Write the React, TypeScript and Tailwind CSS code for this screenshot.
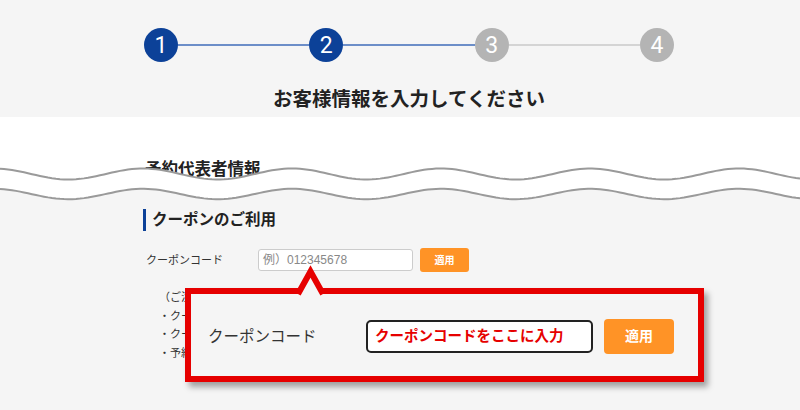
import React from 'react';

// Stepper + coupon form, with a torn-page wave and a zoomed callout on top

const steps = [
  { n: 1, done: true },
  { n: 2, done: true },
  { n: 3, done: false },
  { n: 4, done: false },
];

// sine wave path through the page width
function wavePoints(center: number, amp: number) {
  const pts: string[] = [];
  for (let x = 0; x <= 800; x += 4) {
    const y = center - amp * Math.cos((2 * Math.PI * (x - 143)) / 149);
    pts.push(`${x},${y.toFixed(2)}`);
  }
  return pts;
}

function Wave() {
  const top = wavePoints(14, 5.5);
  const bottom = wavePoints(34, 5.2);
  const between = `M${top.join(' L')} L${[...bottom].reverse().join(' L')} Z`;
  const below = `M${bottom.join(' L')} L800,46 L0,46 Z`;
  return (
    <svg className="absolute left-0 top-[160px] w-[800px] h-[46px]" viewBox="0 0 800 46">
      <path d={between} fill="#ffffff" />
      <path d={below} fill="#f5f5f5" />
      <path d={`M${top.join(' L')}`} fill="none" stroke="#9a9a9a" strokeWidth="2" />
      <path d={`M${bottom.join(' L')}`} fill="none" stroke="#9a9a9a" strokeWidth="2" />
    </svg>
  );
}

function Stepper() {
  return (
    <div className="ml-[144px] w-[530px] flex items-center">
      {steps.map((s, i) => (
        <React.Fragment key={s.n}>
          {i > 0 && (
            <div className={i <= 2 ? 'flex-1 h-[2px] bg-[#6c8ec8]' : 'flex-1 h-[2px] bg-[#d4d4d4]'} />
          )}
          <div
            className={
              s.done
                ? 'w-[34px] h-[34px] rounded-full bg-[#0c4198] text-white flex items-center justify-center text-[23px] leading-none font-[Roboto,sans-serif]'
                : 'w-[34px] h-[34px] rounded-full bg-[#b4b4b4] text-white flex items-center justify-center text-[23px] leading-none font-[Roboto,sans-serif]'
            }
          >
            {s.n}
          </div>
        </React.Fragment>
      ))}
    </div>
  );
}

export default function App() {
  return (
    <div className="relative w-[800px] h-[410px] overflow-hidden bg-[#f5f5f5] text-[#333] font-['Liberation_Sans','Noto_Sans_CJK_JP',sans-serif]">
      {/* Header */}
      <header className="h-[117px] pt-[28px]">
        <Stepper />
        <h1 className="ml-[144px] w-[530px] mt-[25px] text-center text-[19.5px] leading-[24px] font-bold text-[#222]">
          お客様情報を入力してください
        </h1>
      </header>

      {/* White band (cut by wave) */}
      <section className="h-[78px] bg-white pl-[145px] pt-[42px]">
        <h2 className="text-[16.5px] leading-[20px] font-bold text-[#222]">予約代表者情報</h2>
      </section>

      {/* Coupon section */}
      <section className="pl-[143px]">
        <h2 className="mt-[14px] h-[22px] border-l-[3px] border-[#0c4198] pl-[6px] text-[15.5px] leading-[22px] font-bold text-[#222]">
          クーポンのご利用
        </h2>
        <div className="mt-[17px] h-[24px] flex items-center">
          <span className="ml-[3px] w-[112px] text-[11px] leading-none text-[#333]">クーポンコード</span>
          <div className="w-[155px] h-[22px] border border-[#cccccc] rounded-[3px] bg-white pl-[4px] flex items-center text-[12px] text-[#888]">
            例）012345678
          </div>
          <button className="ml-[7px] w-[49px] h-[24px] rounded-[3px] bg-[#ff9326] text-white text-[10px] font-bold">
            適用
          </button>
        </div>
        <div className="mt-[16px] pl-[16px] text-[11px] leading-[18.5px] text-[#333]">
          <p>（ご注意）</p>
          <p>・クーポンコードは半角英数字で入力してください。</p>
          <p>・クーポンは1予約につき1枚のみご利用いただけます。</p>
          <p>・予約確定後のクーポン適用はできません。</p>
        </div>
      </section>

      <Wave />

      {/* Zoomed callout */}
      <div className="absolute left-[185px] top-[288px] w-[519px] h-[94px] border-[6px] border-[#e60000] bg-[#f5f5f5] shadow-[4px_5px_6px_rgba(0,0,0,0.35)] flex items-center pl-[17px] pt-[3px]">
        <span className="w-[158px] text-[15.5px] leading-none text-[#333]">クーポンコード</span>
        <div className="w-[227px] h-[33px] border-2 border-[#222] rounded-[5px] bg-white pl-[7px] flex items-center text-[14.5px] font-bold text-[#e60000]">
          クーポンコードをここに入力
        </div>
        <button className="ml-[11px] w-[70px] h-[35px] rounded-[4px] bg-[#ff9326] text-white text-[14px] font-bold">
          適用
        </button>
      </div>
      <svg className="absolute left-[280px] top-[262px] w-[60px] h-[40px]" viewBox="280 262 60 40">
        <polygon points="298,294 310.5,271.5 323,294" fill="#f5f5f5" />
        <polyline points="298,294 310.5,271.5 323,294" fill="none" stroke="#e60000" strokeWidth="6" strokeLinejoin="miter" />
      </svg>
    </div>
  );
}
